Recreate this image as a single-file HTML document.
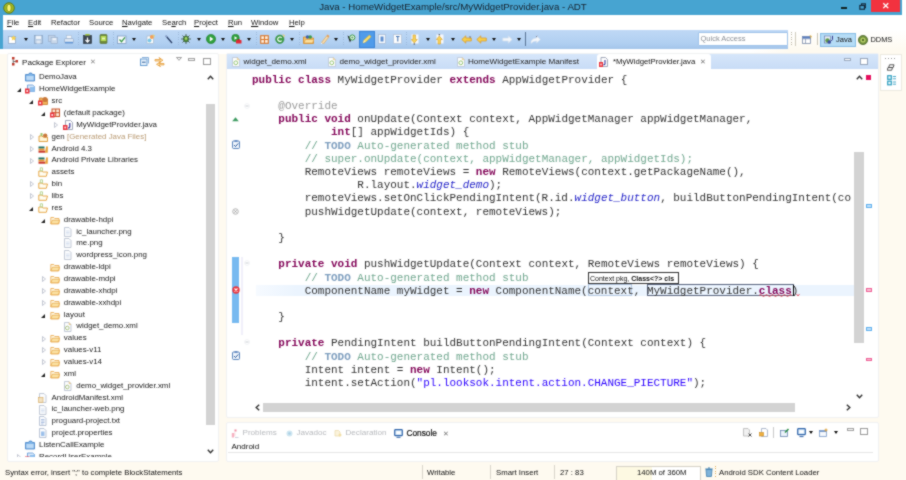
<!DOCTYPE html>
<html><head><meta charset="utf-8"><title>Java - HomeWidgetExample/src/MyWidgetProvider.java - ADT</title>
<style>
*{box-sizing:border-box;margin:0;padding:0}
html,body{width:906px;height:480px;overflow:hidden;background:#fff;font-family:"Liberation Sans",sans-serif;font-size:8px;color:#1a1a1a}
.abs,.abs *{position:absolute}
#code,#code *{position:static}
#code{position:absolute;z-index:5}
span{white-space:nowrap}
#wrap{position:absolute;left:0;top:0;width:906px;height:480px;overflow:hidden;background:#fff;filter:url(#softblur)}
#titlebar{left:0;top:0;width:902px;height:14.6px;background:#47a4d1}
#title{left:0;top:0;width:906px;text-align:center;font-size:9.7px;line-height:14.5px;color:#16222e}
#menubar{left:3px;top:14.6px;width:903px;height:15.4px;background:#fff}
#menubar span{top:.4px;line-height:15px;font-size:7.7px;color:#111}
#menubar u{position:static;text-decoration:underline}
#toolbar{left:3px;top:29.7px;width:785px;height:19.6px;background:linear-gradient(#bfd8f5,#b0cff1 70%,#a4c5ea)}
#bl{left:0;top:14px;width:3px;height:35px;background:#47a4d1}
#main{left:0;top:49px;width:906px;height:431px;background:#fefaf0}
#persp{left:788px;top:29.5px;width:118px;height:20px;background:linear-gradient(#fff,#fefaf0)}
.panel{background:#fff;border:1px solid #f0f1f2;border-radius:2px}
#pe{left:7px;top:53px;width:212px;height:409px}
#ed{left:226px;top:53px;width:653px;height:365px}
#bp{left:226px;top:422px;width:653px;height:40px}
#side{left:880px;top:54px;width:22px;height:37px;background:#fff;border:1px solid #eceae0}
#edtabs{left:227px;top:54px;width:651px;height:15px;background:linear-gradient(#d6e6fa,#c8dcf6)}
.tab{font-size:8.1px;line-height:15px;color:#222;top:54px}
#acttab{left:597px;top:54px;width:114px;height:16px;background:#fff;border-radius:3px 3px 0 0}
#codeclip{left:227px;top:70px;width:627px;height:332px;overflow:hidden;z-index:5}
#code{left:25px;top:3.7px;font-family:"Liberation Mono",monospace;font-size:10.97px;line-height:13.18px;white-space:pre;color:#333}
#code span{white-space:pre}
.k{color:#84085a;font-weight:bold}
.c{color:#72a890}
.t{color:#7f9fbf;font-weight:bold}
.s{color:#2a00ff}
.f{color:#2424c8;font-style:italic}
.a{color:#9c9c9c}
.tree span{font-size:7.9px;line-height:12px;color:#1a1a1a}
#status{left:0;top:462px;width:906px;height:18px;background:#fefaf0}
#status span{font-size:7.75px;line-height:18px;color:#111;top:1.8px}
.sb{background:#d3d3d3}
.arr{width:0;height:0;border-left:2.5px solid transparent;border-right:2.5px solid transparent;border-top:3px solid #111}
</style></head><body>
<svg width="0" height="0" style="position:absolute"><defs><filter id="softblur" x="0" y="0" width="100%" height="100%" color-interpolation-filters="sRGB"><feConvolveMatrix order="3" kernelMatrix="0.0417 0.0833 0.0417 0.0833 0.5000 0.0833 0.0417 0.0833 0.0417" divisor="1" edgeMode="duplicate" preserveAlpha="true"/></filter></defs></svg>
<div id="wrap">
<div class="abs" id="main"></div>
<div class="abs" id="titlebar"></div>
<svg class="abs" style="left:3px;top:1.5px" width="12" height="12" viewBox="0 0 12 12"><circle cx="6" cy="6" r="5.300" fill="#a3ba22" stroke="#5a7412" stroke-width=".9"/><ellipse cx="6" cy="6" rx="2.300" ry="3.900" fill="#f7f45e" stroke="#6f8414" stroke-width=".8"/><path d="M6 3v6" stroke="#fbfab0" stroke-width=".8"/></svg>
<div class="abs" id="title">Java - HomeWidgetExample/src/MyWidgetProvider.java - ADT</div>
<div class="abs" style="left:841px;top:7px;width:6px;height:2px;background:#122"></div>
<svg class="abs" style="left:858.5px;top:3px" width="7.5" height="7.5" viewBox="0 0 9 9"><path d="M3 2.500v-1.500h5v4.500h-1.500" fill="none" stroke="#142a3c" stroke-width="1.300"/><rect x="1" y="3" width="5.500" height="4.500" fill="none" stroke="#142a3c" stroke-width="1.400"/></svg>
<div class="abs" style="left:871px;top:0;width:29px;height:12px;background:#f2323f"></div>
<div class="abs" style="left:871px;top:0;width:29px;height:12px;text-align:center;color:#fff;font-size:9px;line-height:12px;font-weight:bold">&#x2715;</div>
<div class="abs" id="bl"></div>
<div class="abs" id="menubar"><span style="left:4px"><u>F</u>ile</span><span style="left:25px"><u>E</u>dit</span><span style="left:48px">Refactor</span><span style="left:86px">Source</span><span style="left:119px"><u>N</u>avigate</span><span style="left:159px">Se<u>a</u>rch</span><span style="left:191px"><u>P</u>roject</span><span style="left:225px"><u>R</u>un</span><span style="left:248px"><u>W</u>indow</span><span style="left:286px"><u>H</u>elp</span></div>
<div class="abs" style="left:0;top:49px;width:790px;height:4.500px;background:linear-gradient(90deg,#fff 95%,#fefaf0)"></div>
<div class="abs" id="toolbar"></div>
<div class="abs" id="persp"></div>
<svg class="abs" style="left:8.0px;top:34.5px" width="9" height="9" viewBox="0 0 9 9"><rect x=".5" y="1.500" width="7" height="7" fill="#fff" stroke="#8fa9c9" stroke-width=".8"/><path d="M5.500 .3l1 1.700 1.900.3-1.400 1.300.3 1.900-1.800-1-1.700 1 .4-1.900-1.400-1.300 1.900-.3z" fill="#f6d256"/></svg>
<div class="abs arr" style="left:23.5px;top:37.5px"></div>
<svg class="abs" style="left:34.0px;top:34.5px" width="9" height="9" viewBox="0 0 9 9"><rect x=".5" y=".5" width="8" height="8" fill="#b9cde4" stroke="#8ca6c6" stroke-width=".8"/><rect x="2" y=".8" width="5" height="3.200" fill="#eef3fa"/><rect x="2.500" y="5.500" width="4" height="3" fill="#dfe8f3"/></svg>
<svg class="abs" style="left:48.0px;top:34.5px" width="10" height="9" viewBox="0 0 10 9"><rect x=".5" y=".5" width="6.500" height="6" fill="#c4d4e8" stroke="#9ab0cc" stroke-width=".7"/><rect x="3" y="2.500" width="6.500" height="6" fill="#c9d8ea" stroke="#9ab0cc" stroke-width=".7"/><rect x="4.500" y="3" width="3.500" height="2.200" fill="#eef3fa"/></svg>
<svg class="abs" style="left:64.0px;top:34.5px" width="10" height="9" viewBox="0 0 10 9"><rect x="2.500" y=".5" width="5" height="3.500" fill="#f4f7fb" stroke="#a9bbd3" stroke-width=".6"/><rect x=".5" y="3.500" width="9" height="4.500" rx="1" fill="#dbe6f3" stroke="#93abc9" stroke-width=".7"/><rect x="1" y="6.800" width="8" height="1.500" fill="#5f95d6"/></svg>
<div class="abs" style="left:78px;top:32px;width:1px;height:14px;background:repeating-linear-gradient(#9db9da 0 1px,transparent 1px 2.500px)"></div>
<svg class="abs" style="left:82.5px;top:34.0px" width="9" height="10" viewBox="0 0 9 10"><rect x=".5" y="1.500" width="8" height="8" fill="#3b4652" stroke="#26303a" stroke-width=".6"/><path d="M2 1.500a2.500 2 0 0 1 5 0z" fill="#a4c639"/><path d="M4.500 3.500v4M2.500 6l2 2.200 2-2.200" fill="none" stroke="#fff" stroke-width="1.200"/></svg>
<svg class="abs" style="left:98.5px;top:34.0px" width="9" height="10" viewBox="0 0 9 10"><rect x="1" y=".5" width="7" height="9" rx="1" fill="#6f8a3a" stroke="#4f6a24" stroke-width=".6"/><rect x="1.800" y="2" width="5.400" height="5" fill="#b6dc54"/><rect x="3" y="3.700" width="3" height="1.600" fill="#eaf6c2"/></svg>
<div class="abs" style="left:112.500px;top:32px;width:1px;height:14px;background:repeating-linear-gradient(#9db9da 0 1px,transparent 1px 2.500px)"></div>
<svg class="abs" style="left:117.0px;top:34.5px" width="10" height="9" viewBox="0 0 10 9"><rect x=".5" y="1" width="8.500" height="7.500" fill="#f7fafd" stroke="#7f9cc0" stroke-width=".8"/><path d="M2.500 4.500l2 2.200 3.500-4.400" fill="none" stroke="#3c9a4a" stroke-width="1.300"/></svg>
<div class="abs arr" style="left:131.5px;top:37.5px"></div>
<svg class="abs" style="left:145.5px;top:34.0px" width="9" height="10" viewBox="0 0 9 10"><rect x="1" y="2" width="6.500" height="7.500" fill="#fdfdfd" stroke="#a8b8cc" stroke-width=".7"/><circle cx="3.500" cy="6.500" r="2" fill="#7cc8e8"/><circle cx="5.800" cy="3" r="2" fill="#f2a05a"/><path d="M7 .5l.5 1 1 .2-.8.700.2 1" stroke="#f4d04a" stroke-width=".8" fill="none"/></svg>
<svg class="abs" style="left:164.5px;top:34.5px" width="8" height="9" viewBox="0 0 8 9"><path d="M1 1l6 7" stroke="#2b3f66" stroke-width="1.300"/><path d="M.5 .5l1.500 1.800" stroke="#8aa0c9" stroke-width="1.400"/></svg>
<div class="abs" style="left:177.500px;top:32px;width:1px;height:14px;background:repeating-linear-gradient(#9db9da 0 1px,transparent 1px 2.500px)"></div>
<svg class="abs" style="left:181.0px;top:34.0px" width="10" height="10" viewBox="0 0 10 10"><path d="M5 0v10M0 5h10M1.500 1.500l7 7M8.500 1.500l-7 7" stroke="#39523a" stroke-width=".8"/><ellipse cx="5" cy="5" rx="2.600" ry="3" fill="#4f8f3a" stroke="#2d4f2a" stroke-width=".6"/><ellipse cx="5" cy="4.500" rx="1.200" ry="1.400" fill="#a8d46a"/></svg>
<div class="abs arr" style="left:196.5px;top:37.5px"></div>
<svg class="abs" style="left:206.0px;top:34.0px" width="10" height="10" viewBox="0 0 10 10"><circle cx="5" cy="5" r="4.600" fill="#2fa03c" stroke="#1f7a2c" stroke-width=".6"/><path d="M3.800 2.600l3.600 2.400-3.600 2.400z" fill="#fff"/></svg>
<div class="abs arr" style="left:221.0px;top:37.5px"></div>
<svg class="abs" style="left:230.5px;top:34.0px" width="11" height="10" viewBox="0 0 11 10"><circle cx="4.500" cy="4" r="3.800" fill="#2fa03c" stroke="#1f7a2c" stroke-width=".5"/><path d="M3.500 2.200l2.800 1.800-2.800 1.800z" fill="#fff"/><rect x="5" y="6" width="5.500" height="3.500" rx=".6" fill="#e02a36"/><rect x="6.800" y="5.200" width="2" height="1" fill="#a81c26"/></svg>
<div class="abs arr" style="left:246.5px;top:37.5px"></div>
<div class="abs" style="left:256px;top:32px;width:1px;height:14px;background:repeating-linear-gradient(#9db9da 0 1px,transparent 1px 2.500px)"></div>
<svg class="abs" style="left:259.5px;top:34.5px" width="9" height="9" viewBox="0 0 9 9"><rect x=".7" y=".7" width="7.600" height="7.600" fill="#fdeedd" stroke="#d9762a" stroke-width="1.100"/><path d="M4.500 .7v7.600M.7 4.500h7.600" stroke="#d9762a" stroke-width="1.100"/></svg>
<svg class="abs" style="left:275.0px;top:34.0px" width="10" height="10" viewBox="0 0 10 10"><circle cx="4.800" cy="5.200" r="4.200" fill="#3ea04a" stroke="#2a7a36" stroke-width=".5"/><path d="M6.600 3.800a2.200 2.200 0 1 0 0 2.800" fill="none" stroke="#fff" stroke-width="1.200"/><path d="M8 .3l.5 1 1 .2-.8.700.2 1" stroke="#f4d04a" stroke-width=".8" fill="none"/></svg>
<div class="abs arr" style="left:290.0px;top:37.5px"></div>
<div class="abs" style="left:299px;top:32px;width:1px;height:14px;background:repeating-linear-gradient(#9db9da 0 1px,transparent 1px 2.500px)"></div>
<svg class="abs" style="left:302.5px;top:34.0px" width="11" height="10" viewBox="0 0 11 10"><path d="M.5 3h4l1 1h5v5.500h-10z" fill="#f5c26a" stroke="#d68a2a" stroke-width=".8"/><circle cx="4.500" cy="3" r="1.800" fill="#3c5fb0"/><circle cx="7.200" cy="3" r="1.800" fill="#3c9a4a"/><path d="M1 9l1.500-3.500h8.500l-1.500 3.500z" fill="#fbe0a0" stroke="#e09a35" stroke-width=".6"/></svg>
<svg class="abs" style="left:320.0px;top:34.0px" width="10" height="10" viewBox="0 0 10 10"><path d="M1.500 8.500l5-6.500 2 1.500-5 6.500z" fill="#f4d9a8" stroke="#d9a560" stroke-width=".6"/><path d="M6.500 2l1-1.500 2 1.500-1 1.500z" fill="#e8a05a"/><path d="M1.500 8.500l-.5 1.500 1.500-.5z" fill="#fff"/></svg>
<div class="abs arr" style="left:333.5px;top:37.5px"></div>
<div class="abs" style="left:343px;top:32px;width:1px;height:14px;background:repeating-linear-gradient(#9db9da 0 1px,transparent 1px 2.500px)"></div>
<svg class="abs" style="left:346.0px;top:33.5px" width="10" height="11" viewBox="0 0 10 11"><path d="M1.500 1.500l2.500 7 1-2.500 2.500-.8z" fill="#1b1b1b"/><circle cx="6.300" cy="3.500" r="2.600" fill="#e9f6e6" stroke="#3c9a4a" stroke-width="1"/><path d="M5.300 3.500h2M6.300 2.500v2" stroke="#3c9a4a" stroke-width=".7"/></svg>
<div class="abs" style="left:359px;top:30.500px;width:16px;height:17px;background:#4f9bea;border:1px solid #3b84d6"></div>
<svg class="abs" style="left:362.0px;top:34.0px" width="10" height="10" viewBox="0 0 10 10"><path d="M1 9l1-3 5.500-5 1.500 1.800-5 5z" fill="#f9df6a" stroke="#d9b030" stroke-width=".6"/><path d="M1 9l1-3 1.800 1.800z" fill="#fbeec0"/></svg>
<svg class="abs" style="left:378.0px;top:34.0px" width="8" height="10" viewBox="0 0 8 10"><rect x=".5" y=".5" width="7" height="9" fill="#f6f9fd" stroke="#a9bcd6" stroke-width=".8"/><rect x="2.500" y="2.500" width="3" height="5" fill="#5f8fd0"/></svg>
<svg class="abs" style="left:392.5px;top:34.0px" width="9" height="10" viewBox="0 0 9 10"><rect x=".5" y=".5" width="8" height="9" fill="#fdfdfd" stroke="#b4c4da" stroke-width=".8"/><path d="M3 2.500h3.500M4.800 2.500v5" stroke="#4a78b5" stroke-width="1.100"/></svg>
<div class="abs" style="left:405.500px;top:32px;width:1px;height:14px;background:repeating-linear-gradient(#9db9da 0 1px,transparent 1px 2.500px)"></div>
<svg class="abs" style="left:410.0px;top:33.5px" width="9" height="11" viewBox="0 0 9 11"><rect x="1.500" y=".5" width="7" height="9" fill="#f6f8fb"/><path d="M3 1h2.500v4.500h1.800l-3 3.500-3-3.500h1.700z" fill="#f7d35a" stroke="#d9a02a" stroke-width=".6"/><circle cx="4.300" cy="10" r=".8" fill="#555"/></svg>
<div class="abs arr" style="left:425.5px;top:37.5px"></div>
<svg class="abs" style="left:435.0px;top:33.5px" width="9" height="11" viewBox="0 0 9 11"><rect x="1.500" y=".5" width="7" height="9" fill="#f6f8fb"/><path d="M3 10v-4.500h-1.700l3-3.500 3 3.500h-1.800v4.500z" fill="#f7d35a" stroke="#d9a02a" stroke-width=".6"/><circle cx="4.300" cy=".8" r=".8" fill="#555"/></svg>
<div class="abs arr" style="left:451.0px;top:37.5px"></div>
<svg class="abs" style="left:460.5px;top:34.5px" width="11" height="9" viewBox="0 0 11 9"><path d="M.8 4.500l4-3.700v2.200h5.500v3h-5.500v2.200z" fill="#f7cf4a" stroke="#d9962a" stroke-width=".7"/><path d="M8.500 1l.4.800.8.100-.6.600.1.800" stroke="#555" stroke-width=".6" fill="none"/></svg>
<svg class="abs" style="left:475.5px;top:34.5px" width="11" height="9" viewBox="0 0 11 9"><path d="M.8 4.500l4-3.700v2.200h5.500v3h-5.500v2.200z" fill="#f7cf4a" stroke="#d9962a" stroke-width=".7"/></svg>
<div class="abs arr" style="left:491.5px;top:37.5px"></div>
<svg class="abs" style="left:501.5px;top:34.5px" width="11" height="9" viewBox="0 0 11 9"><path d="M10.200 4.500l-4-3.700v2.200h-5.500v3h5.500v2.200z" fill="#f4f7fb" stroke="#cfdcec" stroke-width=".7"/></svg>
<div class="abs arr" style="left:516.5px;top:37.5px"></div>
<div class="abs" style="left:524.500px;top:32px;width:1px;height:14px;background:#5a7596"></div>
<svg class="abs" style="left:529.5px;top:34.5px" width="11" height="9" viewBox="0 0 11 9"><path d="M1 6.500q1-3.500 5.500-3.500v-2l4 3.500-4 3.500v-2q-3.500 0-5.500 2.500z" fill="#f4f7fb" stroke="#cfdcec" stroke-width=".6"/><path d="M6 2l1.200-1" stroke="#667" stroke-width=".8"/></svg>
<div class="abs" style="left:697.500px;top:31.500px;width:90.500px;height:14px;background:#fff;border:1px solid #9fc3ea;border-radius:1px"></div>
<span class="abs" style="left:700.500px;top:32px;font-size:7.5px;line-height:13px;color:#8a8f96">Quick Access</span>
<div class="abs" style="left:790.500px;top:32px;width:1.500px;height:14px;background:repeating-linear-gradient(#b9b5a6 0 1px,transparent 1px 2.500px)"></div>
<div class="abs" style="left:795px;top:32px;width:1px;height:14px;background:#cfcbbd"></div>
<svg class="abs" style="left:802.0px;top:34.5px" width="10" height="9" viewBox="0 0 10 9"><rect x=".5" y="1.500" width="8" height="7" fill="#fff" stroke="#7a8aa8" stroke-width=".8"/><path d="M.5 3.800h8M3.500 3.800v4.700" stroke="#7a8aa8" stroke-width=".7"/><rect x=".5" y="1.500" width="8" height="2" fill="#5a7fc0"/><path d="M8 .2l.5 1 1 .2-.8.700.2 1" stroke="#e8b030" stroke-width=".9" fill="none"/></svg>
<div class="abs" style="left:816.500px;top:33px;width:1px;height:12px;background:#c9c5b6"></div>
<div class="abs" style="left:820px;top:32.500px;width:35.500px;height:14px;background:#b5dcf6;border:1px solid #86bde6"></div>
<svg class="abs" style="left:823.5px;top:34.5px" width="10" height="10" viewBox="0 0 10 10"><rect x=".5" y="1" width="6" height="7" fill="#e9eef7" stroke="#6a7fae" stroke-width=".7"/><circle cx="3.500" cy="5.500" r="2.200" fill="#5f9a4a"/><circle cx="5.200" cy="7" r="1.800" fill="#3c4fa0"/><path d="M8.500 .8v3.500c0 1-.6 1.300-1.500 1.100" fill="none" stroke="#3a3a8a" stroke-width="1"/></svg>
<span class="abs" style="left:836px;top:33px;font-size:7.5px;line-height:13px;color:#111">Java</span>
<svg class="abs" style="left:857.5px;top:34.5px" width="10" height="10" viewBox="0 0 10 10"><circle cx="5" cy="5" r="4.600" fill="#6f8f3a" stroke="#3f5a1c" stroke-width=".7"/><circle cx="5" cy="5" r="2.600" fill="#b8cf6a"/><circle cx="5" cy="5" r="1.200" fill="#55702a"/></svg>
<span class="abs" style="left:870.500px;top:33px;font-size:7.4px;line-height:13px;color:#111">DDMS</span>
<div class="abs panel" id="pe"></div>
<div class="abs panel" id="ed"></div>
<div class="abs panel" id="bp"></div>
<div class="abs" id="side"></div>
<div class="abs" id="edtabs"></div>
<div class="abs" id="acttab"></div>
<div class="abs" id="codeclip"><div id="code"><span class="k">public class</span> MyWidgetProvider <span class="k">extends</span> AppWidgetProvider {

    <span class="a">@Override</span>
    <span class="k">public void</span> onUpdate(Context context, AppWidgetManager appWidgetManager,
            <span class="k">int</span>[] appWidgetIds) {
        <span class="c">// <span class="t">TODO</span> Auto-generated method stub</span>
        <span class="c">// super.onUpdate(context, appWidgetManager, appWidgetIds);</span>
        RemoteViews remoteViews = <span class="k">new</span> RemoteViews(context.getPackageName(),
                R.layout.<span class="f">widget_demo</span>);
        remoteViews.setOnClickPendingIntent(R.id.<span class="f">widget_button</span>, buildButtonPendingIntent(co
        pushWidgetUpdate(context, remoteViews);

    }

    <span class="k">private void</span> pushWidgetUpdate(Context context, RemoteViews remoteViews) {
        <span class="c">// <span class="t">TODO</span> Auto-generated method stub</span>
        ComponentName myWidget = <span class="k">new</span> ComponentName(context, MyWidgetProvider.<span class="k">class</span>)

    }

    <span class="k">private</span> PendingIntent buildButtonPendingIntent(Context context) {
        <span class="c">// <span class="t">TODO</span> Auto-generated method stub</span>
        Intent intent = <span class="k">new</span> Intent();
        intent.setAction(<span class="s">"pl.looksok.intent.action.CHANGE_PIECTURE"</span>);</div></div>
<div class="abs tree" style="left:0;top:0;width:204px;height:456.5px;overflow:hidden"><span style="left:39.0px;top:71.3px">DemoJava</span><svg class="abs" style="left:25.4px;top:72.4px" width="10" height="10" viewBox="0 0 10 10"><path d="M0.5 2.5h3l1-1.5h2l1 1.5h2v6.5h-9z" fill="#7db4e8" stroke="#3f7fc4" stroke-width=".8"/><rect x="1.3" y="4" width="7.4" height="4.2" fill="#b9d8f5"/></svg><span style="left:39.0px;top:83.2px">HomeWidgetExample</span><svg class="abs" style="left:25.4px;top:84.3px" width="10" height="10" viewBox="0 0 10 10"><path d="M2.5 1h5l2 1.5v5h-7z" fill="#dbeafa" stroke="#5c96d6" stroke-width=".8"/><path d="M5 3h4.5v4.5h-5z" fill="#8fc0ee"/><rect x="0" y="4.5" width="4.5" height="5" fill="#e8323c"/><rect x="1.3" y="6.0" width="1.8" height="2" fill="#fff" opacity=".8"/></svg><svg class="abs" style="left:16.6px;top:88.3px" width="4" height="4" viewBox="0 0 4 4"><path d="M4 0v4h-4z" fill="#222"/></svg><span style="left:51.6px;top:95.0px">src</span><svg class="abs" style="left:38.0px;top:96.1px" width="10" height="10" viewBox="0 0 10 10"><path d="M1.5 2h3l1 1h4v5.5h-8z" fill="#f0b45c" stroke="#c97a2a" stroke-width=".8"/><circle cx="7" cy="3.5" r="2.6" fill="#c9793a"/><rect x="0" y="4.5" width="4.5" height="5" fill="#e8323c"/><rect x="1.3" y="6.0" width="1.8" height="2" fill="#fff" opacity=".8"/></svg><svg class="abs" style="left:29.2px;top:100.1px" width="4" height="4" viewBox="0 0 4 4"><path d="M4 0v4h-4z" fill="#222"/></svg><span style="left:63.8px;top:106.9px">(default package)</span><svg class="abs" style="left:50.2px;top:108.0px" width="10" height="10" viewBox="0 0 10 10"><rect x="2" y="1" width="7.5" height="7.5" fill="#fbe9d8" stroke="#c9552a" stroke-width="1"/><path d="M5.7 1v7.5M2 4.7h7.5" stroke="#c9552a" stroke-width="1"/><rect x="0" y="4.5" width="4.5" height="5" fill="#e8323c"/><rect x="1.3" y="6.0" width="1.8" height="2" fill="#fff" opacity=".8"/></svg><svg class="abs" style="left:41.4px;top:112.0px" width="4" height="4" viewBox="0 0 4 4"><path d="M4 0v4h-4z" fill="#222"/></svg><span style="left:76.3px;top:118.7px">MyWidgetProvider.java</span><svg class="abs" style="left:62.7px;top:119.8px" width="10" height="10" viewBox="0 0 10 10"><path d="M2.5 .5h5l2 2v7h-7z" fill="#fff" stroke="#8a93a8" stroke-width=".8"/><path d="M6.8 3v3.6c0 1-.6 1.4-1.8 1.2" fill="none" stroke="#33339a" stroke-width="1.2"/><rect x="0" y="5" width="4.5" height="5" fill="#e8323c"/><rect x="1.3" y="6.5" width="1.8" height="2" fill="#fff" opacity=".8"/></svg><svg class="abs" style="left:54.3px;top:122.0px" width="4" height="6" viewBox="0 0 4 6"><path d="M.5 .5l3 2.500-3 2.500z" fill="#fff" stroke="#b4b9c6" stroke-width=".8"/></svg><span style="left:51.6px;top:130.6px">gen <i style="position:static;font-style:normal;color:#b99a72">[Generated Java Files]</i></span><svg class="abs" style="left:38.0px;top:131.7px" width="10" height="10" viewBox="0 0 10 10"><path d="M1 4h3l1 1h4.5v4.5h-8.5z" fill="#fff6d8" stroke="#e09a35" stroke-width=".9"/><path d="M2.5 1h2v3h-2z" fill="#9cc46a"/><circle cx="7.2" cy="3.6" r="2.2" fill="#c9793a"/></svg><svg class="abs" style="left:29.6px;top:133.9px" width="4" height="6" viewBox="0 0 4 6"><path d="M.5 .5l3 2.500-3 2.500z" fill="#fff" stroke="#b4b9c6" stroke-width=".8"/></svg><span style="left:51.6px;top:142.5px">Android 4.3</span><svg class="abs" style="left:38.0px;top:143.6px" width="10" height="10" viewBox="0 0 10 10"><rect x=".5" y="2.5" width="6" height="2" fill="#1f6f62"/><rect x=".5" y="4.7" width="6" height="1.8" fill="#e8912a"/><rect x=".5" y="6.7" width="6.5" height="2" fill="#c8362c"/><path d="M6.8 8.7l1.5-6.5 1.6.4-.2 6.1z" fill="#e9a23a"/></svg><svg class="abs" style="left:29.6px;top:145.8px" width="4" height="6" viewBox="0 0 4 6"><path d="M.5 .5l3 2.500-3 2.500z" fill="#fff" stroke="#b4b9c6" stroke-width=".8"/></svg><span style="left:51.6px;top:154.3px">Android Private Libraries</span><svg class="abs" style="left:38.0px;top:155.4px" width="10" height="10" viewBox="0 0 10 10"><rect x=".5" y="2.5" width="6" height="2" fill="#1f6f62"/><rect x=".5" y="4.7" width="6" height="1.8" fill="#e8912a"/><rect x=".5" y="6.7" width="6.5" height="2" fill="#c8362c"/><path d="M6.8 8.7l1.5-6.5 1.6.4-.2 6.1z" fill="#e9a23a"/></svg><svg class="abs" style="left:29.6px;top:157.6px" width="4" height="6" viewBox="0 0 4 6"><path d="M.5 .5l3 2.500-3 2.500z" fill="#fff" stroke="#b4b9c6" stroke-width=".8"/></svg><span style="left:51.6px;top:166.2px">assets</span><svg class="abs" style="left:38.0px;top:167.3px" width="10" height="10" viewBox="0 0 10 10"><path d="M.8 4h3l1 1h4.7l-1.2 4.3h-7.5z" fill="#fffdf2" stroke="#e5a03a" stroke-width=".9"/><path d="M2.3 .8h2.2v3h-2.200z" fill="#fff" stroke="#9cc46a" stroke-width=".7"/></svg><span style="left:51.6px;top:178.0px">bin</span><svg class="abs" style="left:38.0px;top:179.1px" width="10" height="10" viewBox="0 0 10 10"><path d="M.8 4h3l1 1h4.7l-1.2 4.3h-7.5z" fill="#fffdf2" stroke="#e5a03a" stroke-width=".9"/><path d="M2.3 .8h2.2v3h-2.200z" fill="#fff" stroke="#9cc46a" stroke-width=".7"/></svg><svg class="abs" style="left:29.6px;top:181.3px" width="4" height="6" viewBox="0 0 4 6"><path d="M.5 .5l3 2.500-3 2.500z" fill="#fff" stroke="#b4b9c6" stroke-width=".8"/></svg><span style="left:51.6px;top:189.9px">libs</span><svg class="abs" style="left:38.0px;top:191.0px" width="10" height="10" viewBox="0 0 10 10"><path d="M.8 4h3l1 1h4.7l-1.2 4.3h-7.5z" fill="#fffdf2" stroke="#e5a03a" stroke-width=".9"/><path d="M2.3 .8h2.2v3h-2.200z" fill="#fff" stroke="#9cc46a" stroke-width=".7"/></svg><svg class="abs" style="left:29.6px;top:193.2px" width="4" height="6" viewBox="0 0 4 6"><path d="M.5 .5l3 2.500-3 2.500z" fill="#fff" stroke="#b4b9c6" stroke-width=".8"/></svg><span style="left:51.6px;top:201.8px">res</span><svg class="abs" style="left:38.0px;top:202.9px" width="10" height="10" viewBox="0 0 10 10"><path d="M.8 4h3l1 1h4.7l-1.2 4.3h-7.5z" fill="#fffdf2" stroke="#e5a03a" stroke-width=".9"/><path d="M2.3 .8h2.2v3h-2.200z" fill="#fff" stroke="#9cc46a" stroke-width=".7"/></svg><svg class="abs" style="left:29.2px;top:206.9px" width="4" height="4" viewBox="0 0 4 4"><path d="M4 0v4h-4z" fill="#222"/></svg><span style="left:63.8px;top:213.6px">drawable-hdpi</span><svg class="abs" style="left:50.2px;top:214.7px" width="10" height="10" viewBox="0 0 10 10"><path d="M.8 2.5h3l1 1h4.200v5.300h-8.200z" fill="#fef8e4" stroke="#e8a648" stroke-width=".8"/><path d="M.8 8.800l1.500-3.600h7.500l-1.600 3.600z" fill="#fbe2a4" stroke="#e5a03a" stroke-width=".7"/></svg><svg class="abs" style="left:41.4px;top:218.7px" width="4" height="4" viewBox="0 0 4 4"><path d="M4 0v4h-4z" fill="#222"/></svg><span style="left:76.3px;top:225.5px">ic_launcher.png</span><svg class="abs" style="left:62.7px;top:226.6px" width="10" height="10" viewBox="0 0 10 10"><path d="M1.5 .5h4.500l2 2v7h-6.500z" fill="#fbfcfe" stroke="#b4bccb" stroke-width=".8"/><path d="M3 4h3.500M3 5.500h3.500M3 7h3.500" stroke="#c9d6ea" stroke-width=".7"/></svg><span style="left:76.3px;top:237.3px">me.png</span><svg class="abs" style="left:62.7px;top:238.4px" width="10" height="10" viewBox="0 0 10 10"><path d="M1.5 .5h4.500l2 2v7h-6.500z" fill="#fbfcfe" stroke="#b4bccb" stroke-width=".8"/><path d="M3 4h3.500M3 5.500h3.500M3 7h3.500" stroke="#c9d6ea" stroke-width=".7"/></svg><span style="left:76.3px;top:249.2px">wordpress_icon.png</span><svg class="abs" style="left:62.7px;top:250.3px" width="10" height="10" viewBox="0 0 10 10"><path d="M1.5 .5h4.500l2 2v7h-6.500z" fill="#fbfcfe" stroke="#b4bccb" stroke-width=".8"/><path d="M3 4h3.500M3 5.500h3.500M3 7h3.500" stroke="#c9d6ea" stroke-width=".7"/></svg><span style="left:63.8px;top:261.1px">drawable-ldpi</span><svg class="abs" style="left:50.2px;top:262.2px" width="10" height="10" viewBox="0 0 10 10"><path d="M.8 2.5h3l1 1h4.200v5.300h-8.200z" fill="#fef8e4" stroke="#e8a648" stroke-width=".8"/><path d="M.8 8.800l1.500-3.600h7.500l-1.600 3.600z" fill="#fbe2a4" stroke="#e5a03a" stroke-width=".7"/></svg><span style="left:63.8px;top:272.9px">drawable-mdpi</span><svg class="abs" style="left:50.2px;top:274.0px" width="10" height="10" viewBox="0 0 10 10"><path d="M.8 2.5h3l1 1h4.200v5.300h-8.200z" fill="#fef8e4" stroke="#e8a648" stroke-width=".8"/><path d="M.8 8.800l1.500-3.600h7.500l-1.600 3.600z" fill="#fbe2a4" stroke="#e5a03a" stroke-width=".7"/></svg><svg class="abs" style="left:41.8px;top:276.2px" width="4" height="6" viewBox="0 0 4 6"><path d="M.5 .5l3 2.500-3 2.500z" fill="#fff" stroke="#b4b9c6" stroke-width=".8"/></svg><span style="left:63.8px;top:284.8px">drawable-xhdpi</span><svg class="abs" style="left:50.2px;top:285.9px" width="10" height="10" viewBox="0 0 10 10"><path d="M.8 2.5h3l1 1h4.200v5.300h-8.200z" fill="#fef8e4" stroke="#e8a648" stroke-width=".8"/><path d="M.8 8.800l1.500-3.600h7.500l-1.600 3.600z" fill="#fbe2a4" stroke="#e5a03a" stroke-width=".7"/></svg><svg class="abs" style="left:41.8px;top:288.1px" width="4" height="6" viewBox="0 0 4 6"><path d="M.5 .5l3 2.500-3 2.500z" fill="#fff" stroke="#b4b9c6" stroke-width=".8"/></svg><span style="left:63.8px;top:296.6px">drawable-xxhdpi</span><svg class="abs" style="left:50.2px;top:297.7px" width="10" height="10" viewBox="0 0 10 10"><path d="M.8 2.5h3l1 1h4.200v5.300h-8.200z" fill="#fef8e4" stroke="#e8a648" stroke-width=".8"/><path d="M.8 8.800l1.500-3.600h7.500l-1.600 3.600z" fill="#fbe2a4" stroke="#e5a03a" stroke-width=".7"/></svg><svg class="abs" style="left:41.8px;top:299.9px" width="4" height="6" viewBox="0 0 4 6"><path d="M.5 .5l3 2.500-3 2.500z" fill="#fff" stroke="#b4b9c6" stroke-width=".8"/></svg><span style="left:63.8px;top:308.5px">layout</span><svg class="abs" style="left:50.2px;top:309.6px" width="10" height="10" viewBox="0 0 10 10"><path d="M.8 2.5h3l1 1h4.200v5.300h-8.200z" fill="#fef8e4" stroke="#e8a648" stroke-width=".8"/><path d="M.8 8.800l1.500-3.600h7.500l-1.600 3.600z" fill="#fbe2a4" stroke="#e5a03a" stroke-width=".7"/></svg><svg class="abs" style="left:41.4px;top:313.6px" width="4" height="4" viewBox="0 0 4 4"><path d="M4 0v4h-4z" fill="#222"/></svg><span style="left:76.3px;top:320.4px">widget_demo.xml</span><svg class="abs" style="left:62.7px;top:321.5px" width="10" height="10" viewBox="0 0 10 10"><path d="M1.500 .500h4.500l2 2v7h-6.500z" fill="#fbfcfe" stroke="#b4bccb" stroke-width=".8"/><circle cx="4.300" cy="6" r="1.800" fill="none" stroke="#9ab86a" stroke-width=".8"/><path d="M6 .5v2h2" fill="#f3d9a0" stroke="#d9b36a" stroke-width=".5"/></svg><span style="left:63.8px;top:332.2px">values</span><svg class="abs" style="left:50.2px;top:333.3px" width="10" height="10" viewBox="0 0 10 10"><path d="M.8 2.5h3l1 1h4.200v5.300h-8.200z" fill="#fef8e4" stroke="#e8a648" stroke-width=".8"/><path d="M.8 8.800l1.500-3.600h7.500l-1.600 3.600z" fill="#fbe2a4" stroke="#e5a03a" stroke-width=".7"/></svg><svg class="abs" style="left:41.8px;top:335.5px" width="4" height="6" viewBox="0 0 4 6"><path d="M.5 .5l3 2.500-3 2.500z" fill="#fff" stroke="#b4b9c6" stroke-width=".8"/></svg><span style="left:63.8px;top:344.1px">values-v11</span><svg class="abs" style="left:50.2px;top:345.2px" width="10" height="10" viewBox="0 0 10 10"><path d="M.8 2.5h3l1 1h4.200v5.300h-8.200z" fill="#fef8e4" stroke="#e8a648" stroke-width=".8"/><path d="M.8 8.800l1.500-3.600h7.500l-1.600 3.600z" fill="#fbe2a4" stroke="#e5a03a" stroke-width=".7"/></svg><svg class="abs" style="left:41.8px;top:347.4px" width="4" height="6" viewBox="0 0 4 6"><path d="M.5 .5l3 2.500-3 2.500z" fill="#fff" stroke="#b4b9c6" stroke-width=".8"/></svg><span style="left:63.8px;top:355.9px">values-v14</span><svg class="abs" style="left:50.2px;top:357.0px" width="10" height="10" viewBox="0 0 10 10"><path d="M.8 2.5h3l1 1h4.200v5.300h-8.200z" fill="#fef8e4" stroke="#e8a648" stroke-width=".8"/><path d="M.8 8.800l1.500-3.600h7.500l-1.600 3.600z" fill="#fbe2a4" stroke="#e5a03a" stroke-width=".7"/></svg><svg class="abs" style="left:41.8px;top:359.2px" width="4" height="6" viewBox="0 0 4 6"><path d="M.5 .5l3 2.500-3 2.500z" fill="#fff" stroke="#b4b9c6" stroke-width=".8"/></svg><span style="left:63.8px;top:367.8px">xml</span><svg class="abs" style="left:50.2px;top:368.9px" width="10" height="10" viewBox="0 0 10 10"><path d="M.8 2.5h3l1 1h4.200v5.300h-8.200z" fill="#fef8e4" stroke="#e8a648" stroke-width=".8"/><path d="M.8 8.800l1.500-3.600h7.500l-1.600 3.600z" fill="#fbe2a4" stroke="#e5a03a" stroke-width=".7"/></svg><svg class="abs" style="left:41.4px;top:372.9px" width="4" height="4" viewBox="0 0 4 4"><path d="M4 0v4h-4z" fill="#222"/></svg><span style="left:76.3px;top:379.7px">demo_widget_provider.xml</span><svg class="abs" style="left:62.7px;top:380.8px" width="10" height="10" viewBox="0 0 10 10"><path d="M1.500 .500h4.500l2 2v7h-6.500z" fill="#fbfcfe" stroke="#b4bccb" stroke-width=".8"/><circle cx="4.300" cy="6" r="1.800" fill="none" stroke="#9ab86a" stroke-width=".8"/><path d="M6 .5v2h2" fill="#f3d9a0" stroke="#d9b36a" stroke-width=".5"/></svg><span style="left:51.6px;top:391.5px">AndroidManifest.xml</span><svg class="abs" style="left:38.0px;top:392.6px" width="10" height="10" viewBox="0 0 10 10"><path d="M1.500 .500h4.500l2 2v7h-6.500z" fill="#fbfcfe" stroke="#b4bccb" stroke-width=".8"/><rect x=".5" y="4.500" width="4.500" height="5" fill="#f3e2c2" stroke="#d4a75a" stroke-width=".6"/></svg><span style="left:51.6px;top:403.4px">ic_launcher-web.png</span><svg class="abs" style="left:38.0px;top:404.5px" width="10" height="10" viewBox="0 0 10 10"><path d="M1.5 .5h4.500l2 2v7h-6.500z" fill="#fbfcfe" stroke="#b4bccb" stroke-width=".8"/><path d="M3 4h3.500M3 5.500h3.500M3 7h3.500" stroke="#c9d6ea" stroke-width=".7"/></svg><span style="left:51.6px;top:415.2px">proguard-project.txt</span><svg class="abs" style="left:38.0px;top:416.3px" width="10" height="10" viewBox="0 0 10 10"><path d="M1.500 .500h4.500l2 2v7h-6.500z" fill="#fbfcfe" stroke="#a9b6cc" stroke-width=".8"/><path d="M3 3.500h3.500M3 5h3.500M3 6.500h3.500M3 8h2.500" stroke="#8fa9d4" stroke-width=".7"/></svg><span style="left:51.6px;top:427.1px">project.properties</span><svg class="abs" style="left:38.0px;top:428.2px" width="10" height="10" viewBox="0 0 10 10"><path d="M1.500 .500h4.500l2 2v7h-6.500z" fill="#fbfcfe" stroke="#a9b6cc" stroke-width=".8"/><rect x="3" y="3.500" width="3.500" height="4.500" fill="#9cc0ea"/></svg><span style="left:39.0px;top:439.0px">ListenCallExample</span><svg class="abs" style="left:25.4px;top:440.1px" width="10" height="10" viewBox="0 0 10 10"><path d="M0.5 2.5h3l1-1.5h2l1 1.5h2v6.5h-9z" fill="#7db4e8" stroke="#3f7fc4" stroke-width=".8"/><rect x="1.3" y="4" width="7.4" height="4.2" fill="#b9d8f5"/></svg><span style="left:39.0px;top:450.8px">RecordUserExample</span><svg class="abs" style="left:25.4px;top:451.9px" width="10" height="10" viewBox="0 0 10 10"><path d="M2.5 1h5l2 1.5v5h-7z" fill="#dbeafa" stroke="#5c96d6" stroke-width=".8"/><path d="M5 3h4.5v4.5h-5z" fill="#8fc0ee"/><rect x="0" y="4.5" width="4.5" height="5" fill="#e8323c"/><rect x="1.3" y="6.0" width="1.8" height="2" fill="#fff" opacity=".8"/></svg><svg class="abs" style="left:17.0px;top:454.1px" width="4" height="6" viewBox="0 0 4 6"><path d="M.5 .5l3 2.500-3 2.500z" fill="#fff" stroke="#b4b9c6" stroke-width=".8"/></svg></div>
<div class="abs"><span style="left:22px;top:56.7px;font-size:8.1px;line-height:12px;color:#111">Package Explorer</span><svg class="abs" style="left:11px;top:57px" width="8" height="9" viewBox="0 0 8 9"><rect x="1" y="0" width="2.5" height="2.500" fill="#c0392b"/><rect x="1" y="6" width="2.500" height="2.500" fill="#c0392b"/><path d="M2.200 2.500v4M2.200 4.500h3" stroke="#555" stroke-width=".8" fill="none"/><rect x="4.500" y="3" width="2.500" height="2.500" fill="#c0392b"/></svg><span style="left:90px;top:56px;font-size:7px;line-height:12px;color:#888">&#x2715;</span></div>
<svg class="abs" style="left:140px;top:57px" width="9" height="9" viewBox="0 0 9 9"><path d="M2 .5h6.500v6" fill="none" stroke="#7aa7d6" stroke-width=".9"/><rect x=".5" y="2" width="6.500" height="6.500" fill="#e6f1fb" stroke="#5c96cf" stroke-width=".9"/><path d="M2 5.200h3.600" stroke="#2f5f9a" stroke-width="1"/></svg>
<svg class="abs" style="left:154px;top:56px" width="11" height="11" viewBox="0 0 11 11"><path d="M1 3.500h5.500l-1.500-2 4 2.800-4 2.200 1.500-1.500h-5.500z" fill="#fde8b5" stroke="#e39a3a" stroke-width=".8"/><path d="M10 7.500h-5l1.500-1.500-4 2.300 4 2.400-1.500-1.800h5z" fill="#fde8b5" stroke="#e39a3a" stroke-width=".8"/></svg>
<svg class="abs" style="left:176px;top:57px" width="6" height="4" viewBox="0 0 6 4"><path d="M.5 .5h5l-2.500 2.800z" fill="#fff" stroke="#777" stroke-width=".7"/></svg>
<div class="abs" style="left:188px;top:58px;width:7px;height:3px;border:1px solid #a0a0a0;background:#fff"></div>
<div class="abs" style="left:203px;top:58px;width:7.5px;height:6.5px;border:1px solid #9a9a9a;border-top-width:1.5px;background:#fff"></div>
<div class="abs sb" style="left:205.500px;top:103.500px;width:9.500px;height:321.500px"></div>
<svg class="abs" style="left:206.5px;top:75px" width="7" height="5" viewBox="0 0 7 5"><path d="M.8 4.200l2.700-3 2.700 3" fill="none" stroke="#333" stroke-width="1.400"/></svg>
<svg class="abs" style="left:206.5px;top:448.5px" width="7" height="5" viewBox="0 0 7 5"><path d="M.8 .8l2.700 3 2.700-3" fill="none" stroke="#333" stroke-width="1.400"/></svg>
<svg class="abs" style="left:231.5px;top:56.5px" width="8" height="10" viewBox="0 0 8 10"><path d="M.5 .5h5l2 2v7h-7z" fill="#fdfefe" stroke="#b9c4d6" stroke-width=".8"/><circle cx="3.800" cy="5.800" r="1.900" fill="none" stroke="#8fbf6a" stroke-width=".9"/><path d="M5.300 .5v2.200h2.200" fill="#f7e3b0" stroke="#d9b36a" stroke-width=".5"/></svg>
<span class="abs tab" style="left:243.500px">widget_demo.xml</span>
<svg class="abs" style="left:327.5px;top:56.5px" width="8" height="10" viewBox="0 0 8 10"><path d="M.5 .5h5l2 2v7h-7z" fill="#fdfefe" stroke="#b9c4d6" stroke-width=".8"/><circle cx="3.800" cy="5.800" r="1.900" fill="none" stroke="#8fbf6a" stroke-width=".9"/><path d="M5.300 .5v2.200h2.200" fill="#f7e3b0" stroke="#d9b36a" stroke-width=".5"/></svg>
<span class="abs tab" style="left:339.500px">demo_widget_provider.xml</span>
<svg class="abs" style="left:456.5px;top:56.5px" width="8" height="10" viewBox="0 0 8 10"><path d="M.5 .5h5l2 2v7h-7z" fill="#fdfefe" stroke="#b9c4d6" stroke-width=".8"/><circle cx="3.800" cy="5.800" r="1.900" fill="none" stroke="#8fbf6a" stroke-width=".9"/><path d="M5.300 .5v2.200h2.200" fill="#f7e3b0" stroke="#d9b36a" stroke-width=".5"/></svg>
<span class="abs tab" style="left:468px">HomeWidgetExample Manifest</span>
<svg class="abs" style="left:599px;top:56.5px" width="9" height="10" viewBox="0 0 9 10"><path d="M2 .5h4.500l2 2v7h-6.500z" fill="#fff" stroke="#8a93a8" stroke-width=".8"/><path d="M6 3v3.500c0 1-.6 1.400-1.700 1.200" fill="none" stroke="#33339a" stroke-width="1.100"/><rect x="0" y="5" width="4" height="5" fill="#e8323c"/><rect x="1.200" y="6.500" width="1.600" height="2" fill="#fff" opacity=".8"/></svg>
<span class="abs tab" style="left:613px;color:#111;font-size:7.75px">*MyWidgetProvider.java</span>
<span class="abs" style="left:700px;top:55px;font-size:7px;line-height:13px;color:#777">&#x2715;</span>
<div class="abs" style="left:844px;top:58px;width:7px;height:3px;border:1px solid #9aa9bf;background:#fff"></div>
<div class="abs" style="left:860px;top:58px;width:7.5px;height:6.5px;border:1px solid #97a5ba;border-top-width:1.5px;background:#fff"></div>
<div class="abs" style="left:256px;top:284.500px;width:598px;height:11.500px;background:linear-gradient(90deg,#f6faff,#ebf4fe 40px)"></div>
<div class="abs" style="left:231.500px;top:257px;width:7.500px;height:65.500px;background:#78baf0"></div>
<div class="abs" style="left:240.500px;top:257px;width:2.500px;height:78px;background:#f0effa"></div>
<svg class="abs" style="left:231.5px;top:140.2px" width="8" height="9" viewBox="0 0 8 9"><rect x=".5" y="1" width="7" height="7.500" rx="1" fill="#eef4fb" stroke="#4a78b5" stroke-width=".9"/><rect x="2.500" y="0" width="3" height="2" fill="#6a8fc4"/><path d="M2 5l1.500 1.600 2.700-3.200" fill="none" stroke="#2d5a9a" stroke-width="1"/></svg>
<svg class="abs" style="left:231.5px;top:351.1px" width="8" height="9" viewBox="0 0 8 9"><rect x=".5" y="1" width="7" height="7.500" rx="1" fill="#eef4fb" stroke="#4a78b5" stroke-width=".9"/><rect x="2.500" y="0" width="3" height="2" fill="#6a8fc4"/><path d="M2 5l1.500 1.600 2.700-3.200" fill="none" stroke="#2d5a9a" stroke-width="1"/></svg>
<svg class="abs" style="left:231.5px;top:116.5px" width="7" height="5" viewBox="0 0 7 5"><path d="M3.500 .3l3.300 3.900h-6.600z" fill="#3f9b62"/></svg>
<svg class="abs" style="left:231.5px;top:207.5px" width="7" height="7" viewBox="0 0 7 7"><circle cx="3.500" cy="3.500" r="2.800" fill="#f4f4f4" stroke="#aaa" stroke-width=".8"/><path d="M2.300 2.300l2.400 2.400M4.700 2.300l-2.400 2.400" stroke="#999" stroke-width=".7"/></svg>
<svg class="abs" style="left:232px;top:286px" width="8" height="8" viewBox="0 0 8 8"><circle cx="4" cy="4" r="3.700" fill="#e8363f"/><path d="M2.500 2.500l3 3M5.500 2.500l-3 3" stroke="#fff" stroke-width="1.100"/></svg>
<svg class="abs" style="left:243.5px;top:102.8px" width="6" height="6" viewBox="0 0 6 6"><circle cx="3" cy="3" r="2.500" fill="#fff" stroke="#eceef1" stroke-width=".7"/><path d="M1.400 3h3.200" stroke="#c3c7ce" stroke-width=".9"/></svg>
<svg class="abs" style="left:243.5px;top:259.8px" width="6" height="6" viewBox="0 0 6 6"><circle cx="3" cy="3" r="2.500" fill="#fff" stroke="#eceef1" stroke-width=".7"/><path d="M1.400 3h3.200" stroke="#c3c7ce" stroke-width=".9"/></svg>
<svg class="abs" style="left:243.5px;top:339.3px" width="6" height="6" viewBox="0 0 6 6"><circle cx="3" cy="3" r="2.500" fill="#fff" stroke="#eceef1" stroke-width=".7"/><path d="M1.400 3h3.200" stroke="#c3c7ce" stroke-width=".9"/></svg>
<div class="abs" style="left:588px;top:284px;width:44px;height:12px;border:1px solid #b4c8e2"></div>
<div class="abs" style="left:647px;top:284px;width:147px;height:12px;border:1px solid #5a6680"></div>
<div class="abs" style="left:792.500px;top:285px;width:1.500px;height:11px;background:#000"></div>
<div class="abs" style="left:588px;top:272px;width:91px;height:12px;border:1px solid #333;background:#fff;z-index:6"></div>
<span class="abs" style="left:590px;top:272.500px;font-size:7px;line-height:11px;color:#111;z-index:7">Context pkg, <b style="position:static">Class&lt;?&gt; cls</b></span>
<svg class="abs" style="left:759px;top:293.5px" width="34" height="3" viewBox="0 0 34 3"><path d="M0 1.500q1.500-2 3 0t3 0 3 0 3 0 3 0 3 0 3 0 3 0 3 0 3 0 3 0" fill="none" stroke="#e8324a" stroke-width=".8"/></svg>
<svg class="abs" style="left:796px;top:293px" width="4" height="4" viewBox="0 0 4 4"><path d="M.5 1l1.500 2 1.500-2" fill="none" stroke="#e8324a" stroke-width=".8"/></svg>
<div class="abs sb" style="left:854px;top:152px;width:9.500px;height:191px"></div>
<svg class="abs" style="left:855.5px;top:75px" width="7" height="5" viewBox="0 0 7 5"><path d="M.8 4.200l2.700-3 2.700 3" fill="none" stroke="#333" stroke-width="1.400"/></svg>
<svg class="abs" style="left:855.5px;top:394px" width="7" height="5" viewBox="0 0 7 5"><path d="M.8 .8l2.700 3 2.700-3" fill="none" stroke="#333" stroke-width="1.400"/></svg>
<div class="abs sb" style="left:262.500px;top:403px;width:532.500px;height:9px"></div>
<svg class="abs" style="left:254.5px;top:404px" width="5" height="7" viewBox="0 0 5 7"><path d="M4.200 .8l-3 2.700 3 2.700" fill="none" stroke="#333" stroke-width="1.400"/></svg>
<svg class="abs" style="left:846px;top:404px" width="5" height="7" viewBox="0 0 5 7"><path d="M.8 .8l3 2.700-3 2.700" fill="none" stroke="#333" stroke-width="1.400"/></svg>
<div class="abs" style="left:866px;top:74.500px;width:5px;height:5px;background:#e6105e"></div>
<div class="abs" style="left:865.500px;top:204.0px;width:6.500px;height:3.500px;background:#bfe0fb;border:1px solid #5fb0ee"></div>
<div class="abs" style="left:865.500px;top:288.0px;width:6.500px;height:3.500px;background:#f9c0d4;border:1px solid #ee5f96"></div>
<div class="abs" style="left:865.500px;top:327.2px;width:6.500px;height:3.500px;background:#bfe0fb;border:1px solid #5fb0ee"></div>
<div class="abs" style="left:865.500px;top:357.9px;width:6.500px;height:3.500px;background:#f9c0d4;border:1px solid #ee5f96"></div>
<div class="abs" style="left:885px;top:58px;width:12px;height:1px;background:repeating-linear-gradient(90deg,#999 0 1px,transparent 1px 3px)"></div>
<svg class="abs" style="left:887px;top:63.5px" width="8" height="7" viewBox="0 0 8 7"><path d="M2.500 .8h4.500l-.8 2.700h-4.500z" fill="#fff" stroke="#444" stroke-width=".9"/><path d="M1 3.500h4.500l-.8 2.700h-4.500z" fill="#fff" stroke="#444" stroke-width=".9"/></svg>
<svg class="abs" style="left:886.5px;top:74.5px" width="10" height="11" viewBox="0 0 10 11"><rect x=".7" y=".7" width="3.600" height="3.600" fill="#e6f6fa" stroke="#2f9fc0" stroke-width="1.200"/><rect x=".7" y="6.200" width="3.600" height="3.600" fill="#e6f6fa" stroke="#2f9fc0" stroke-width="1.200"/><path d="M5.800 1.500h3.200M5.800 3.800h3.200M5.800 7h3.200M5.800 9.200h3.200" stroke="#4aa9c9" stroke-width="1"/></svg>
<svg class="abs" style="left:230.5px;top:428.5px" width="8" height="9" viewBox="0 0 8 9"><rect x="3.500" y=".5" width="2" height="2" fill="#f08aa0"/><rect x=".8" y="4" width="2.200" height="4.500" fill="#f6b0c0"/><path d="M4 8.500h3.500" stroke="#c9c9d9" stroke-width=".9"/><path d="M3.800 3.500v4" stroke="#f6c0cc" stroke-width=".8"/></svg>
<span class="abs" style="left:242.500px;top:427px;font-size:8.1px;line-height:12px;color:#b7b9bd">Problems</span>
<svg class="abs" style="left:286px;top:429.5px" width="7" height="7" viewBox="0 0 7 7"><circle cx="3.500" cy="3.500" r="3" fill="#cfe6f1"/><circle cx="3.500" cy="3.500" r="1.300" fill="#a9d0e4"/></svg>
<span class="abs" style="left:296.500px;top:427px;font-size:8.1px;line-height:12px;color:#b7b9bd">Javadoc</span>
<svg class="abs" style="left:333.5px;top:429px" width="8" height="8" viewBox="0 0 8 8"><path d="M1 1.500h3.500l1.500 1.500v4h-5z" fill="#fbf3dc" stroke="#ead9a8" stroke-width=".7"/><circle cx="6" cy="6" r="1.500" fill="#f1dfa6"/></svg>
<span class="abs" style="left:345.500px;top:427px;font-size:8.1px;line-height:12px;color:#b7b9bd">Declaration</span>
<svg class="abs" style="left:394px;top:428.5px" width="9" height="9" viewBox="0 0 9 9"><rect x=".7" y=".7" width="7.600" height="6" rx=".8" fill="#d9ecfb" stroke="#2f63a8" stroke-width="1.200"/><rect x="2.300" y="2.300" width="4.400" height="2.600" fill="#fff"/><path d="M2.500 8.300h4" stroke="#2f63a8" stroke-width="1"/></svg>
<span class="abs" style="left:406.500px;top:427px;font-size:8.300px;line-height:12px;color:#111;-webkit-text-stroke:.2px #111">Console</span>
<span class="abs" style="left:442.500px;top:427.500px;font-size:7px;line-height:12px;color:#777">&#x2715;</span>
<span class="abs" style="left:231.500px;top:441px;font-size:8px;line-height:12px;color:#111">Android</span>
<div class="abs" style="left:228px;top:451.5px;width:645px;height:1px;background:#e6e6e6"></div>
<svg class="abs" style="left:743px;top:427.5px" width="9" height="9" viewBox="0 0 9 9"><path d="M.5 .5h4.500l1.500 1.500v6h-6z" fill="#f1f1f1" stroke="#b5b5b5" stroke-width=".8"/><path d="M5.500 5.500l3 3M8.500 5.500l-3 3" stroke="#555" stroke-width="1"/></svg>
<svg class="abs" style="left:759px;top:427.5px" width="9" height="9" viewBox="0 0 9 9"><path d="M2.500 .5h4.500l1.500 1.500v6.500h-6z" fill="#fff" stroke="#9aa8c0" stroke-width=".8"/><rect x=".5" y="4.500" width="4" height="3.500" fill="#f0b040" stroke="#c98a20" stroke-width=".6"/></svg>
<div class="abs" style="left:772.500px;top:427px;width:1px;height:11px;background:#c9c9c9"></div>
<svg class="abs" style="left:779.5px;top:427.5px" width="10" height="9" viewBox="0 0 10 9"><rect x=".5" y="2.500" width="7" height="6" fill="#eaf1fa" stroke="#6a86b0" stroke-width=".8"/><path d="M5 4.500l3.500-3.500" stroke="#2f8f4a" stroke-width="1.600"/></svg>
<svg class="abs" style="left:796.5px;top:428px" width="9" height="10" viewBox="0 0 9 10"><rect x=".7" y=".7" width="7.600" height="6" rx=".8" fill="#d9ecfb" stroke="#2f63a8" stroke-width="1.200"/><rect x="2.300" y="2.300" width="4.400" height="2.600" fill="#fff"/><path d="M2.500 8.600h4" stroke="#2f63a8" stroke-width="1"/></svg>
<div class="abs arr" style="left:808.500px;top:431px"></div>
<svg class="abs" style="left:819px;top:427.5px" width="10" height="9" viewBox="0 0 10 9"><rect x=".5" y="2.500" width="7" height="6" fill="#f4f8fd" stroke="#7a9ac8" stroke-width=".8"/><rect x=".5" y="2.500" width="7" height="1.500" fill="#7a9ac8"/><path d="M7 .5v3M5.500 2h3" stroke="#e0a030" stroke-width="1"/></svg>
<div class="abs arr" style="left:834px;top:431px"></div>
<div class="abs" style="left:846.500px;top:428px;width:7px;height:3px;border:1px solid #a0a0a0;background:#fff"></div>
<div class="abs" style="left:860px;top:428px;width:7.5px;height:6.5px;border:1px solid #9a9a9a;border-top-width:1.5px;background:#fff"></div>
<div class="abs" id="status"><span style="left:5px">Syntax error, insert ";" to complete BlockStatements</span><div style="left:421.5px;top:3px;width:1px;height:14px;background:#d9d5ca"></div><div style="left:489.5px;top:3px;width:1px;height:14px;background:#d9d5ca"></div><div style="left:554px;top:3px;width:1px;height:14px;background:#d9d5ca"></div><span style="left:427px">Writable</span><span style="left:496px">Smart Insert</span><span style="left:560px">27 : 83</span><div style="left:616px;top:4px;width:84.500px;height:15px;background:#fff;border:1px solid #d5d2c6"></div><div style="left:617px;top:5px;width:35px;height:13px;background:#fdf9e2"></div><span style="left:637px">140M of 360M</span><svg class="abs" style="left:705px;top:4.5px" width="8" height="10" viewBox="0 0 8 10"><path d="M1 2.500h6l-.6 7h-4.800z" fill="#7fb3d9" stroke="#3f7fb0" stroke-width=".8"/><path d="M.3 2h7.400M3 1h2" stroke="#3f7fb0" stroke-width="1"/></svg><div style="left:714.500px;top:4px;width:1px;height:11px;background:repeating-linear-gradient(#e0b060 0 1px,transparent 1px 2.500px)"></div><span style="left:719px">Android SDK Content Loader</span></div>
</div>
</body></html>
